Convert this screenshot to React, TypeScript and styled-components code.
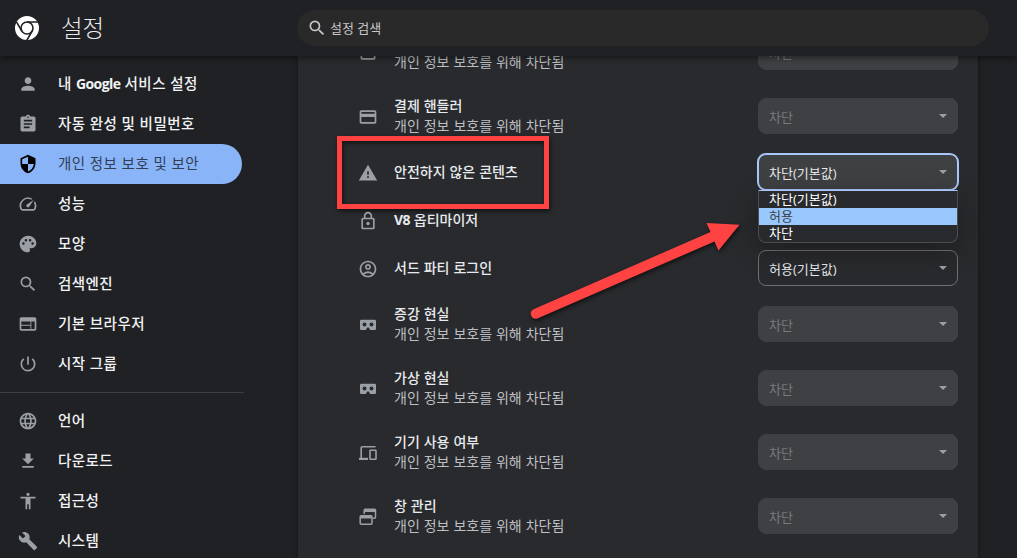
import type { ReactNode } from 'react'
import styled, { createGlobalStyle } from 'styled-components'
import {
  MdAccessibility,
  MdAssignment,
  MdBuild,
  MdCreditCard,
  MdFileDownload,
  MdLanguage,
  MdOutlineAccountCircle,
  MdOutlineLock,
  MdPalette,
  MdPerson,
  MdPowerSettingsNew,
  MdSearch,
  MdSecurity,
  MdSpeed,
  MdWarning,
  MdWeb,
  MdWebAsset,
} from 'react-icons/md'

const BLOCKED = '개인 정보 보호를 위해 차단됨'

const ChromeLogo = () => (
  <svg width="24" height="24" viewBox="0 0 24 24">
    <circle cx="12" cy="12" r="12" fill="#fff" />
    <g fill="none" stroke="#202124" strokeWidth="1.6">
      <circle cx="12" cy="12" r="6" />
      <path d="M12 6h11.5M6.8 15L1.3 5.6M17.2 15l-5.6 9.6" />
    </g>
  </svg>
)

const VrIcon = () => (
  <svg width="20" height="20" viewBox="0 0 20 20" fill="currentColor">
    <path
      fillRule="evenodd"
      d="M3.2 4.8h13.6A1.2 1.2 0 0 1 18 6v7.8a1.2 1.2 0 0 1-1.2 1.2h-3.9a1.2 1.2 0 0 1-1-.6l-.9-1.5a1.150 1.150 0 0 0-2 0l-.9 1.5a1.2 1.2 0 0 1-1 .6H3.2A1.2 1.2 0 0 1 2 13.8V6a1.2 1.2 0 0 1 1.2-1.2zm3.3 2.8a2 2 0 1 0 0 4 2 2 0 0 0 0-4zm7 0a2 2 0 1 0 0 4 2 2 0 0 0 0-4z"
    />
  </svg>
)

const DevicesIcon = () => (
  <svg
    width="20"
    height="20"
    viewBox="0 0 20 20"
    fill="none"
    stroke="currentColor"
    strokeWidth="1.6"
  >
    <path d="M17.5 3.7H4a.8.8 0 0 0-.8.8V15" />
    <path d="M1 15.9h9" strokeWidth="2.2" />
    <rect x="12" y="7.2" width="6" height="9" rx=".5" />
  </svg>
)

const WindowsIcon = () => (
  <svg
    width="20"
    height="20"
    viewBox="0 0 20 20"
    fill="none"
    stroke="currentColor"
    strokeWidth="1.5"
  >
    <path d="M6.2 7V3.2a1 1 0 0 1 1-1h9.3a1 1 0 0 1 1 1v7a1 1 0 0 1-1 1H15" />
    <path d="M6.2 3.5h11.3M2.3 10h11.5" strokeWidth="2.8" />
    <rect x="2.2" y="8.7" width="11.8" height="8.6" rx="1" />
  </svg>
)

interface MenuItem {
  label: ReactNode
  icon: ReactNode
  active?: boolean
}

interface Permission {
  label?: ReactNode
  icon: ReactNode
  value?: string
  blocked?: boolean
  options?: string[]
  marked?: boolean
}

const Menu = ({ items }: { items: MenuItem[] }) => (
  <nav>
    {items.map(({ label, icon, active }, i) => (
      <MenuLink key={i} $active={active}>
        {icon}
        <MenuLabel>{label}</MenuLabel>
      </MenuLink>
    ))}
  </nav>
)

const PermissionRow = ({
  label,
  icon,
  value,
  blocked,
  options,
  marked,
}: Permission) => (
  <Row $tall={blocked}>
    <RowIcon>{icon}</RowIcon>
    <RowText>
      <RowTitle>{label}</RowTitle>
      {blocked && <RowNote>{BLOCKED}</RowNote>}
    </RowText>
    <SelectWrapper>
      <Select $disabled={blocked} $open={!!options}>
        <span>{value}</span>
        <Caret />
      </Select>
      {options && (
        <Options>
          {options.map((option, i) => (
            <Option key={option} $hovered={i === 1}>
              {option}
            </Option>
          ))}
        </Options>
      )}
    </SelectWrapper>
    {marked && <Mark />}
  </Row>
)

const App = () => (
  <Page>
    <GlobalStyle />
    <Header>
      <Brand>
        <ChromeLogo />
        <Heading>설정</Heading>
      </Brand>
      <SearchBox>
        <MdSearch />
        <span>설정 검색</span>
      </SearchBox>
    </Header>
    <Body>
      <Sidebar>
        <Menu items={mainMenu} />
        <Divider />
        <Menu items={advancedMenu} />
      </Sidebar>
      <Card>
        <Rows>
          {permissions.map((permission, i) => (
            <PermissionRow key={i} {...permission} />
          ))}
        </Rows>
      </Card>
    </Body>
    <Arrow viewBox="0 0 230 120">
      <path
        d="M8.5 89.2L185.5 12l-4-9 33 1.8-21 25.7-4-9L12.3 98.4a5 5 0 0 1-3.8-9.2z"
        fill="#ff4242"
      />
    </Arrow>
  </Page>
)

const GlobalStyle = createGlobalStyle`
  * {
    box-sizing: border-box;
  }

  body {
    margin: 0;
    overflow: hidden;
    background: #202124;
    color: #e8eaed;
    font-family: 'Open Sans', 'Noto Sans CJK KR', sans-serif;
  }
`

const Page = styled.div`
  position: relative;
  display: flex;
  flex-direction: column;
  height: 558px;
  overflow: hidden;
`

const Header = styled.header`
  position: relative;
  z-index: 1;
  display: flex;
  align-items: center;
  flex: none;
  height: 56px;
  background: #202124;
  box-shadow: 0 2px 6px rgba(0, 0, 0, 0.45);
`

const Brand = styled.div`
  display: flex;
  align-items: center;
  gap: 22px;
  width: 297px;
  padding-left: 15px;
`

const Heading = styled.h1`
  margin: 0;
  padding-bottom: 2px;
  font-family: 'Noto Sans CJK KR', sans-serif;
  font-size: 23.5px;
  font-weight: 300;
  line-height: 32px;
`

const SearchBox = styled.div`
  display: flex;
  align-items: center;
  gap: 3px;
  width: 692px;
  height: 36px;
  padding-left: 10px;
  border-radius: 18px;
  background: #292929;
  color: #c7c7c7;
  font-size: 13px;

  svg {
    width: 20px;
    height: 20px;
  }

  span {
    padding-bottom: 2px;
  }
`

const Body = styled.div`
  display: flex;
  flex: 1;
  min-height: 0;
`

const Sidebar = styled.aside`
  flex: none;
  width: 298px;
  padding-top: 8px;
`

const MenuLink = styled.a<{ $active?: boolean }>`
  display: flex;
  align-items: center;
  gap: 20px;
  width: 242px;
  height: 40px;
  padding-left: 18px;
  border-radius: 0 20px 20px 0;
  background: ${props => (props.$active ? '#8ab4f8' : 'transparent')};
  color: ${props => (props.$active ? '#303f57' : '#f1f3f4')};
  font-weight: ${props => (props.$active ? 400 : 500)};

  svg {
    flex: none;
    width: 20px;
    height: 20px;
    color: ${props => (props.$active ? '#000' : '#9aa0a6')};
  }
`

const MenuLabel = styled.span`
  padding-bottom: 4px;
  font-size: 14.5px;
  letter-spacing: 0.45px;
  white-space: nowrap;
`

const Latin = styled.b`
  font-size: 14px;
  font-weight: 700;
  letter-spacing: -0.6px;
`

const Divider = styled.hr`
  width: 244px;
  height: 1px;
  margin: 8px 0;
  border: 0;
  background: #3c3d40;
`

const Card = styled.main`
  width: 680px;
  overflow: hidden;
  background: #292a2d;
  box-shadow: 0 0 4px rgba(0, 0, 0, 0.5);
`

/* The list is scrolled part of the way under the header. */
const Rows = styled.div`
  margin-top: -36px;
`

const Row = styled.div<{ $tall?: boolean }>`
  position: relative;
  display: flex;
  align-items: center;
  height: ${props => (props.$tall ? 64 : 48)}px;
  padding: 0 20px 0 60px;
`

const RowIcon = styled.span`
  display: flex;
  padding-top: 2px;
  color: #9aa0a6;

  svg {
    width: 20px;
    height: 20px;
  }
`

const RowText = styled.div`
  flex: 1;
  padding-left: 16px;
  font-size: 14px;
  line-height: 20px;
  word-spacing: 0.3px;
`

const RowTitle = styled.div`
  min-height: 20px;
  font-weight: 500;
`

const RowNote = styled.div`
  color: #bdbfc2;
`

const SelectWrapper = styled.div`
  position: relative;
  width: 200px;
`

const Select = styled.div<{ $disabled?: boolean; $open?: boolean }>`
  display: flex;
  align-items: center;
  justify-content: space-between;
  height: 36px;
  padding: 0 10px;
  border: 1px solid ${props => (props.$disabled ? '#3f4043' : '#6f7072')};
  border-radius: 8px;
  background: ${props =>
    props.$open ? '#3f4042' : props.$disabled ? '#3f4043' : 'transparent'};
  color: ${props => (props.$disabled ? '#77797c' : '#e8eaed')};
  font-size: 13px;
  ${props =>
    props.$open && 'border-color: #a8c7fa; box-shadow: 0 0 0 1px #a8c7fa;'}
`

const Caret = styled.span`
  border: 4px solid transparent;
  border-top-color: #9aa0a6;
  border-bottom: 0;
`

const Options = styled.div`
  position: absolute;
  top: 36px;
  left: 0;
  z-index: 1;
  width: 200px;
  overflow: hidden;
  border: 1px solid #4b4c4f;
  border-top-color: #a8c7fa;
  border-radius: 0 0 8px 8px;
  background: #292a2d;
  box-shadow: 0 8px 30px rgba(0, 0, 0, 0.3);
`

const Option = styled.div<{ $hovered?: boolean }>`
  height: 17px;
  padding-left: 10px;
  background: ${props => (props.$hovered ? '#99c8ff' : 'transparent')};
  color: ${props => (props.$hovered ? '#3c4043' : '#fff')};
  font-size: 13px;
  line-height: 17px;
`

const Mark = styled.div`
  position: absolute;
  top: -12px;
  left: 39px;
  width: 212px;
  height: 73px;
  border: 5px solid #ff4242;
  filter: drop-shadow(1px 2px 2px rgba(0, 0, 0, 0.6));
`

const Arrow = styled.svg`
  position: absolute;
  top: 220px;
  left: 525px;
  z-index: 2;
  width: 230px;
  height: 120px;
  filter: drop-shadow(1px 2px 2px rgba(0, 0, 0, 0.6));
`

const mainMenu: MenuItem[] = [
  {
    label: (
      <>
        내 <Latin>Google</Latin> 서비스 설정
      </>
    ),
    icon: <MdPerson />,
  },
  { label: '자동 완성 및 비밀번호', icon: <MdAssignment /> },
  { label: '개인 정보 보호 및 보안', icon: <MdSecurity />, active: true },
  { label: '성능', icon: <MdSpeed /> },
  { label: '모양', icon: <MdPalette /> },
  { label: '검색엔진', icon: <MdSearch /> },
  { label: '기본 브라우저', icon: <MdWeb /> },
  { label: '시작 그룹', icon: <MdPowerSettingsNew /> },
]

const advancedMenu: MenuItem[] = [
  { label: '언어', icon: <MdLanguage /> },
  { label: '다운로드', icon: <MdFileDownload /> },
  { label: '접근성', icon: <MdAccessibility /> },
  { label: '시스템', icon: <MdBuild /> },
]

const permissions: Permission[] = [
  { icon: <MdWebAsset />, value: '차단', blocked: true },
  { label: '결제 핸들러', icon: <MdCreditCard />, value: '차단', blocked: true },
  {
    label: '안전하지 않은 콘텐츠',
    icon: <MdWarning />,
    value: '차단(기본값)',
    options: ['차단(기본값)', '허용', '차단'],
    marked: true,
  },
  {
    label: (
      <>
        <Latin>V8</Latin> 옵티마이저
      </>
    ),
    icon: <MdOutlineLock />,
  },
  {
    label: '서드 파티 로그인',
    icon: <MdOutlineAccountCircle />,
    value: '허용(기본값)',
  },
  { label: '증강 현실', icon: <VrIcon />, value: '차단', blocked: true },
  { label: '가상 현실', icon: <VrIcon />, value: '차단', blocked: true },
  {
    label: '기기 사용 여부',
    icon: <DevicesIcon />,
    value: '차단',
    blocked: true,
  },
  { label: '창 관리', icon: <WindowsIcon />, value: '차단', blocked: true },
]

export default App
